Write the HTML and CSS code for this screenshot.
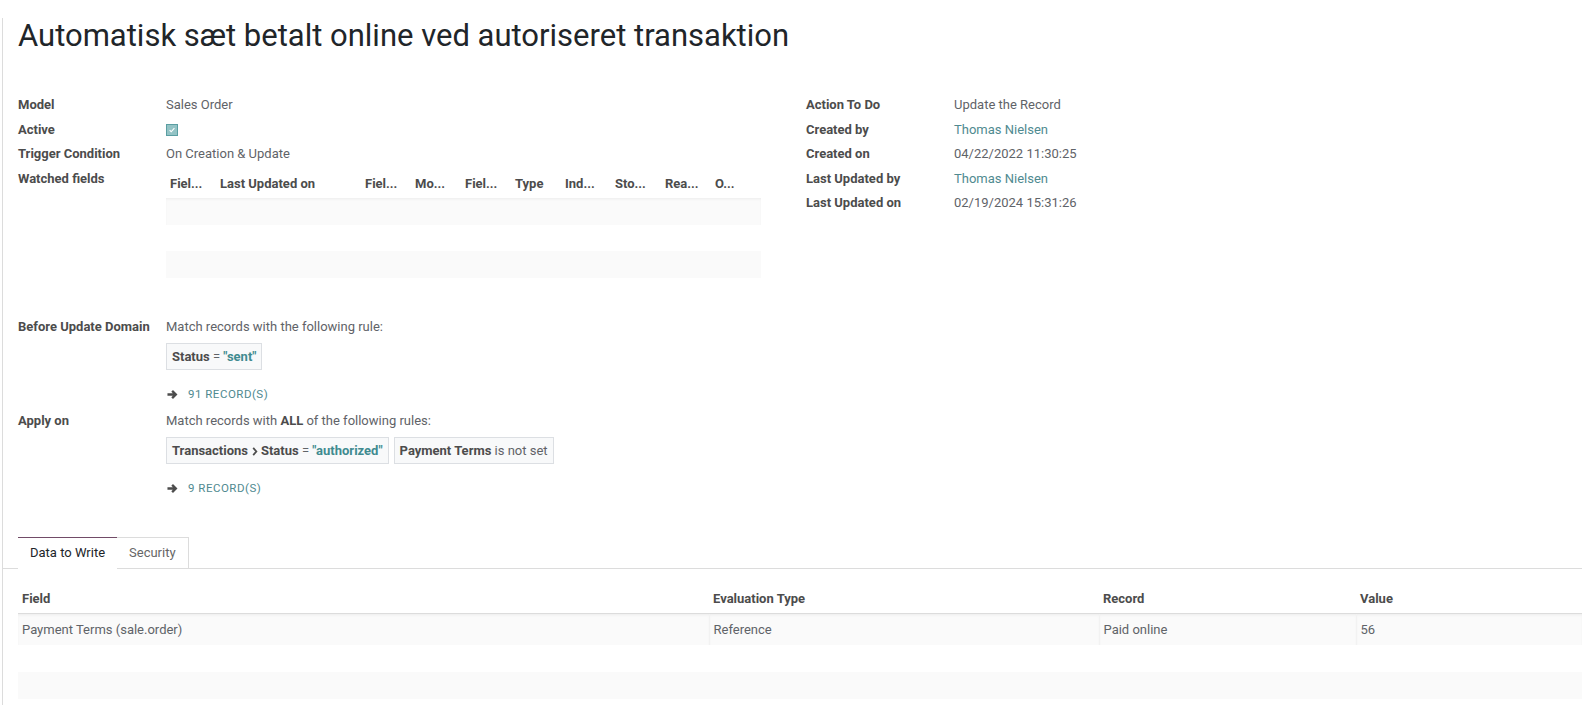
FILE: index.html
```html
<!DOCTYPE html>
<html lang="da">
<head>
  <meta charset="UTF-8" />
  <meta name="viewport" content="width=device-width, initial-scale=1.0"/>
  <title>Automatisk sæt betalt online ved autoriseret transaktion</title>
  <link rel="stylesheet" href="styles.css">
</head>
<body>
  <div class="sheet">
    <div class="inner">
      <h1 class="title">Automatisk sæt betalt online ved autoriseret transaktion</h1>

      <div class="groups">
        <div class="group">
          <div class="row"><div class="lbl">Model</div><div class="val">Sales Order</div></div>
          <div class="row"><div class="lbl">Active</div><div class="val"><span class="check"><svg viewBox="0 0 10 10" width="8" height="8"><path d="M2 5.2l2 2 4-4.4" fill="none" stroke="#fff" stroke-width="1.4"/></svg></span></div></div>
          <div class="row"><div class="lbl">Trigger Condition</div><div class="val">On Creation &amp; Update</div></div>
          <div class="row"><div class="lbl">Watched fields</div>
            <div class="val">
              <table class="mini">
                <thead>
                  <tr>
                    <th class="c50">Fiel...</th>
                    <th class="c145">Last Updated on</th>
                    <th class="c50">Fiel...</th>
                    <th class="c50">Mo...</th>
                    <th class="c50">Fiel...</th>
                    <th class="c50">Type</th>
                    <th class="c50">Ind...</th>
                    <th class="c50">Sto...</th>
                    <th class="c50">Rea...</th>
                    <th>O...</th>
                  </tr>
                </thead>
                <tbody>
                  <tr class="shade first"><td colspan="10"></td></tr>
                  <tr><td colspan="10"></td></tr>
                  <tr class="shade"><td colspan="10"></td></tr>
                </tbody>
              </table>
            </div>
          </div>
        </div>

        <div class="group">
          <div class="row"><div class="lbl">Action To Do</div><div class="val">Update the Record</div></div>
          <div class="row"><div class="lbl">Created by</div><div class="val link">Thomas Nielsen</div></div>
          <div class="row"><div class="lbl">Created on</div><div class="val">04/22/2022 11:30:25</div></div>
          <div class="row"><div class="lbl">Last Updated by</div><div class="val link">Thomas Nielsen</div></div>
          <div class="row"><div class="lbl">Last Updated on</div><div class="val">02/19/2024 15:31:26</div></div>
        </div>
      </div>

      <div class="domains">
        <div class="row domain">
          <div class="lbl">Before Update Domain</div>
          <div class="val">
            <div class="lead">Match records with the following rule:</div>
            <div class="chips">
              <span class="chip"><b>Status</b> <span class="op">=</span> <span class="str">"sent"</span></span>
            </div>
            <div class="records">
              <svg class="arrow" viewBox="0 0 12 12" width="11" height="11"><path d="M0.5 6H9M5.6 2l4 4-4 4" fill="none" stroke="#4c4c4c" stroke-width="2.6"/></svg>
              <span>91 Record(s)</span>
            </div>
          </div>
        </div>
        <div class="row domain second">
          <div class="lbl">Apply on</div>
          <div class="val">
            <div class="lead">Match records with <b>ALL</b> of the following rules:</div>
            <div class="chips">
              <span class="chip"><b>Transactions</b><svg class="chev" viewBox="0 0 6 10" width="6" height="9"><path d="M1 1l3.5 4L1 9" fill="none" stroke="#4c4c4c" stroke-width="2"/></svg><b>Status</b> <span class="op">=</span> <span class="str">"authorized"</span></span>
              <span class="chip"><b>Payment Terms</b> <span class="op">is not set</span></span>
            </div>
            <div class="records">
              <svg class="arrow" viewBox="0 0 12 12" width="11" height="11"><path d="M0.5 6H9M5.6 2l4 4-4 4" fill="none" stroke="#4c4c4c" stroke-width="2.6"/></svg>
              <span>9 Record(s)</span>
            </div>
          </div>
        </div>
      </div>
    </div>

    <div class="tabs">
      <div class="tab active">Data to Write</div>
      <div class="tab">Security</div>
    </div>

    <div class="inner flush">
      <table class="lines">
        <thead>
          <tr>
            <th class="w-field">Field</th>
            <th class="w-eval">Evaluation Type</th>
            <th class="w-rec">Record</th>
            <th>Value</th>
          </tr>
        </thead>
        <tbody>
          <tr class="shade first">
            <td>Payment Terms (sale.order)</td>
            <td>Reference</td>
            <td>Paid online</td>
            <td>56</td>
          </tr>
          <tr class="empty"><td></td><td></td><td></td><td></td></tr>
          <tr class="shade empty"><td></td><td></td><td></td><td></td></tr>
        </tbody>
      </table>
    </div>
  </div>
</body>
</html>
```

FILE: styles.css
```css
* {
  box-sizing: border-box;
}
body {
  margin: 0;
  font-family: Roboto, "Noto Sans", sans-serif;
  font-size: 13px;
  color: #5f6368;
  background: #fff;
  overflow: hidden;
}
.sheet {
  margin-left: 2px;
  border-left: 1px solid #dcdcdc;
  min-height: 705px;
}
.inner {
  padding-left: 15px;
}
.inner.flush {
  padding-right: 0;
}

.title {
  margin: 18px 0 39px 0;
  font-size: 31px;
  line-height: 36px;
  font-weight: 400;
  color: #212529;
}

.groups {
  display: grid;
  grid-template-columns: 788px 1fr;
}
.row {
  display: flex;
  line-height: 24.5px;
}
.lbl {
  width: 148px;
  flex-shrink: 0;
  font-weight: 700;
  color: #4c4c4c;
}
.val {
  flex: 1;
}
.link {
  color: #4f8a90;
}

.check {
  display: inline-flex;
  align-items: center;
  justify-content: center;
  width: 12px;
  height: 12px;
  margin-top: 6px;
  vertical-align: top;
  background: #93c3c5;
  border: 1px solid #5a9ea2;
}

/* watched fields list */
.mini {
  width: 595px;
  margin-top: 3.5px;
  border-collapse: collapse;
  table-layout: fixed;
  line-height: 16px;
}
.mini th {
  height: 28px;
  padding: 0 4px;
  text-align: left;
  font-weight: 700;
  color: #4c4c4c;
  white-space: nowrap;
  overflow: hidden;
}
.mini .c50 { width: 50px; }
.mini .c145 { width: 145px; }
.mini td {
  height: 26.5px;
  padding: 0;
}
.shade td {
  background: #fafafa;
}
.first td {
  box-shadow: inset 0 2px 3px -1px rgba(0, 0, 0, 0.06);
}

/* domains */
.domains {
  margin-top: 37px;
}
.domain.second {
  margin-top: 2.5px;
}
.lead b {
  color: #4c4c4c;
}
.chips {
  display: flex;
  gap: 5px;
  margin-top: 4px;
}
.chip {
  display: inline-block;
  height: 27px;
  padding: 0 5px;
  background: #f8f9fa;
  border: 1px solid #dcdfe3;
  white-space: pre;
  line-height: 25px;
}
.chip b {
  color: #4c4c4c;
}
.chip .op {
  color: #5f6368;
}
.chip .str {
  color: #3f8b90;
  font-weight: 700;
}
.chev {
  margin: 0 3px 0 4px;
  vertical-align: -1px;
}
.records {
  display: flex;
  align-items: center;
  height: 24px;
  margin-top: 12px;
  font-size: 11.5px;
  letter-spacing: 0.5px;
  text-transform: uppercase;
  color: #4f8a90;
}
.arrow {
  margin: 0 10px 0 1px;
}

/* notebook */
.tabs {
  display: flex;
  margin-top: 37px;
  padding-left: 15px;
  border-bottom: 1px solid #dcdcdc;
}
.tab {
  height: 32px;
  line-height: 30px;
  padding: 0 12px;
  margin-bottom: -1px;
  border: 1px solid #dcdcdc;
  border-left: none;
  color: #666;
  background: #fff;
}
.tab.active {
  border-left: none;
  border-right: none;
  border-top: 1px solid #714b67;
  border-bottom: 1px solid #fff;
  color: #212529;
}

.lines {
  width: 100%;
  margin-top: 16px;
  border-collapse: collapse;
  table-layout: fixed;
}
.lines th {
  height: 28px;
  padding: 0 4px;
  text-align: left;
  font-weight: 700;
  color: #4c4c4c;
  border-bottom: 1px solid #dcdcdc;
}
.lines .w-field { width: 691px; }
.lines .w-eval { width: 390px; }
.lines .w-rec { width: 257px; }
.lines td {
  height: 32px;
  padding: 0 4px;
  color: #5f6368;
  border-left: 1px solid #f2f2f2;
}
.lines td:first-child {
  border-left: none;
}
.lines .empty td {
  height: 27px;
  border-left: none;
}
```
